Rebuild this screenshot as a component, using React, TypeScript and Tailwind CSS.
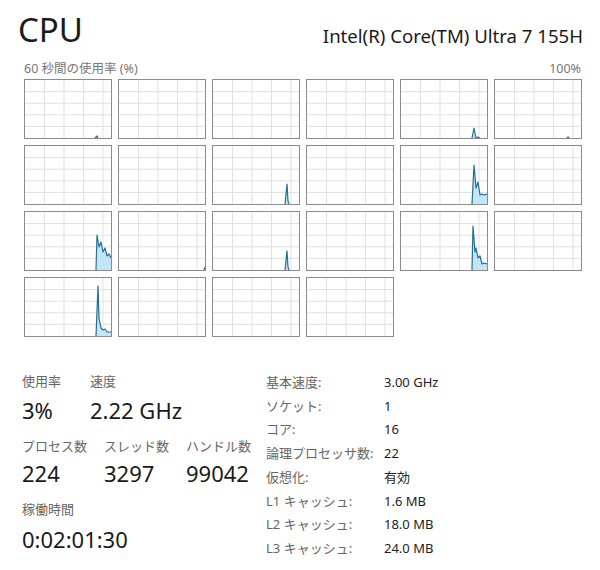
import React from "react";

type Pt = [number, number];

const W = 86;
const H = 58;

const data: Record<number, Pt[]> = {
  0: [[70, 58], [72, 56], [73, 58]],
  4: [[71, 58], [73, 48], [74, 53], [75, 58], [77, 57], [79, 58]],
  5: [[72, 58], [73, 57], [74, 58]],
  8: [[72, 58], [74, 38], [75, 55], [76, 58]],
  10: [[71, 58], [73, 19], [75, 42], [77, 36], [79, 49], [81, 48], [83, 49], [86, 48]],
  12: [[71, 58], [72, 23], [74, 35], [76, 30], [78, 40], [80, 36], [82, 44], [84, 42], [86, 46]],
  13: [[85, 58], [86, 55]],
  14: [[72, 58], [74, 39], [75, 55], [76, 58]],
  16: [[71, 58], [72, 14], [74, 40], [75, 36], [77, 46], [79, 44], [81, 52], [83, 51], [86, 52]],
  18: [[71, 58], [73, 8], [74, 40], [76, 50], [78, 52], [80, 51], [82, 54], [86, 54]],
};

function Cell({ pts }: { pts?: Pt[] }) {
  const vx = [19.5, 39, 58.5, 78];
  const hy = [11.6, 23.2, 34.8, 46.4];
  return (
    <div className="w-[88px] h-[60px] border border-[#8b8b8b] bg-white">
      <svg width={W} height={H} viewBox={`0 0 ${W} ${H}`} className="block">
        {vx.map((x) => (
          <line key={"v" + x} x1={x} y1={0} x2={x} y2={H} stroke="#e1e1e1" strokeWidth={1} />
        ))}
        {hy.map((y) => (
          <line key={"h" + y} x1={0} y1={y} x2={W} y2={y} stroke="#e1e1e1" strokeWidth={1} />
        ))}
        {pts && (
          <>
            <polygon
              points={[...pts, [pts[pts.length - 1][0], H] as Pt].map((p) => p.join(",")).join(" ")}
              fill="#c2e6f5"
            />
            <polyline
              points={pts.map((p) => p.join(",")).join(" ")}
              fill="none"
              stroke="#23708f"
              strokeWidth={1.2}
              strokeLinejoin="round"
            />
          </>
        )}
      </svg>
    </div>
  );
}

const font = { fontFamily: '"Segoe UI", "Noto Sans", "Noto Sans CJK JP", sans-serif' };

export default function App() {
  const cells = Array.from({ length: 22 }, (_, i) => i);
  const specs: [string, string][] = [
    ["基本速度:", "3.00 GHz"],
    ["ソケット:", "1"],
    ["コア:", "16"],
    ["論理プロセッサ数:", "22"],
    ["仮想化:", "有効"],
    ["L1 キャッシュ:", "1.6 MB"],
    ["L2 キャッシュ:", "18.0 MB"],
    ["L3 キャッシュ:", "24.0 MB"],
  ];
  return (
    <div className="w-[600px] h-[570px] bg-white text-[#1a1a1a] overflow-hidden" style={font}>
      <div className="flex items-end justify-between pl-[18px] pr-[17px] pt-[10px]">
        <div className="text-[33px] leading-[40px]">CPU</div>
        <div className="text-[18.6px] leading-[26px] pb-[1px]">Intel(R) Core(TM) Ultra 7 155H</div>
      </div>
      <div className="flex justify-between pl-[24px] pr-[19px] mt-[11px] text-[12.5px] leading-[16px] text-[#777]">
        <span>60 秒間の使用率 (%)</span>
        <span>100%</span>
      </div>
      <div className="ml-[24px] mt-[2px] grid grid-cols-[repeat(6,88px)] gap-[6px]">
        {cells.map((i) => (
          <Cell key={i} pts={data[i]} />
        ))}
      </div>
      <div className="flex mt-[34px] pl-[22px]">
        <div className="w-[244px] flex flex-col pt-[1px]">
          <div className="flex">
            <div className="w-[68px]">
              <div className="text-[13px] leading-[18px] text-[#666]">使用率</div>
              <div className="text-[22px] leading-[30px] mt-[5px]">3%</div>
            </div>
            <div>
              <div className="text-[13px] leading-[18px] text-[#666]">速度</div>
              <div className="text-[22px] leading-[30px] mt-[5px]">2.22 GHz</div>
            </div>
          </div>
          <div className="flex mt-[12px]">
            <div className="w-[82px]">
              <div className="text-[13px] leading-[18px] text-[#666]">プロセス数</div>
              <div className="text-[22px] leading-[30px] mt-[3px]">224</div>
            </div>
            <div className="w-[82px]">
              <div className="text-[13px] leading-[18px] text-[#666]">スレッド数</div>
              <div className="text-[22px] leading-[30px] mt-[3px]">3297</div>
            </div>
            <div>
              <div className="text-[13px] leading-[18px] text-[#666]">ハンドル数</div>
              <div className="text-[22px] leading-[30px] mt-[3px]">99042</div>
            </div>
          </div>
          <div className="mt-[12px]">
            <div className="text-[13px] leading-[18px] text-[#666]">稼働時間</div>
            <div className="text-[22px] leading-[30px] mt-[6px]">0:02:01:30</div>
          </div>
        </div>
        <div className="flex flex-col">
          {specs.map(([k, v]) => (
            <div key={k} className="flex h-[23.7px] items-center text-[13px]">
              <div className="w-[118px] text-[#666]">{k}</div>
              <div className="text-[#222]">{v}</div>
            </div>
          ))}
        </div>
      </div>
    </div>
  );
}
